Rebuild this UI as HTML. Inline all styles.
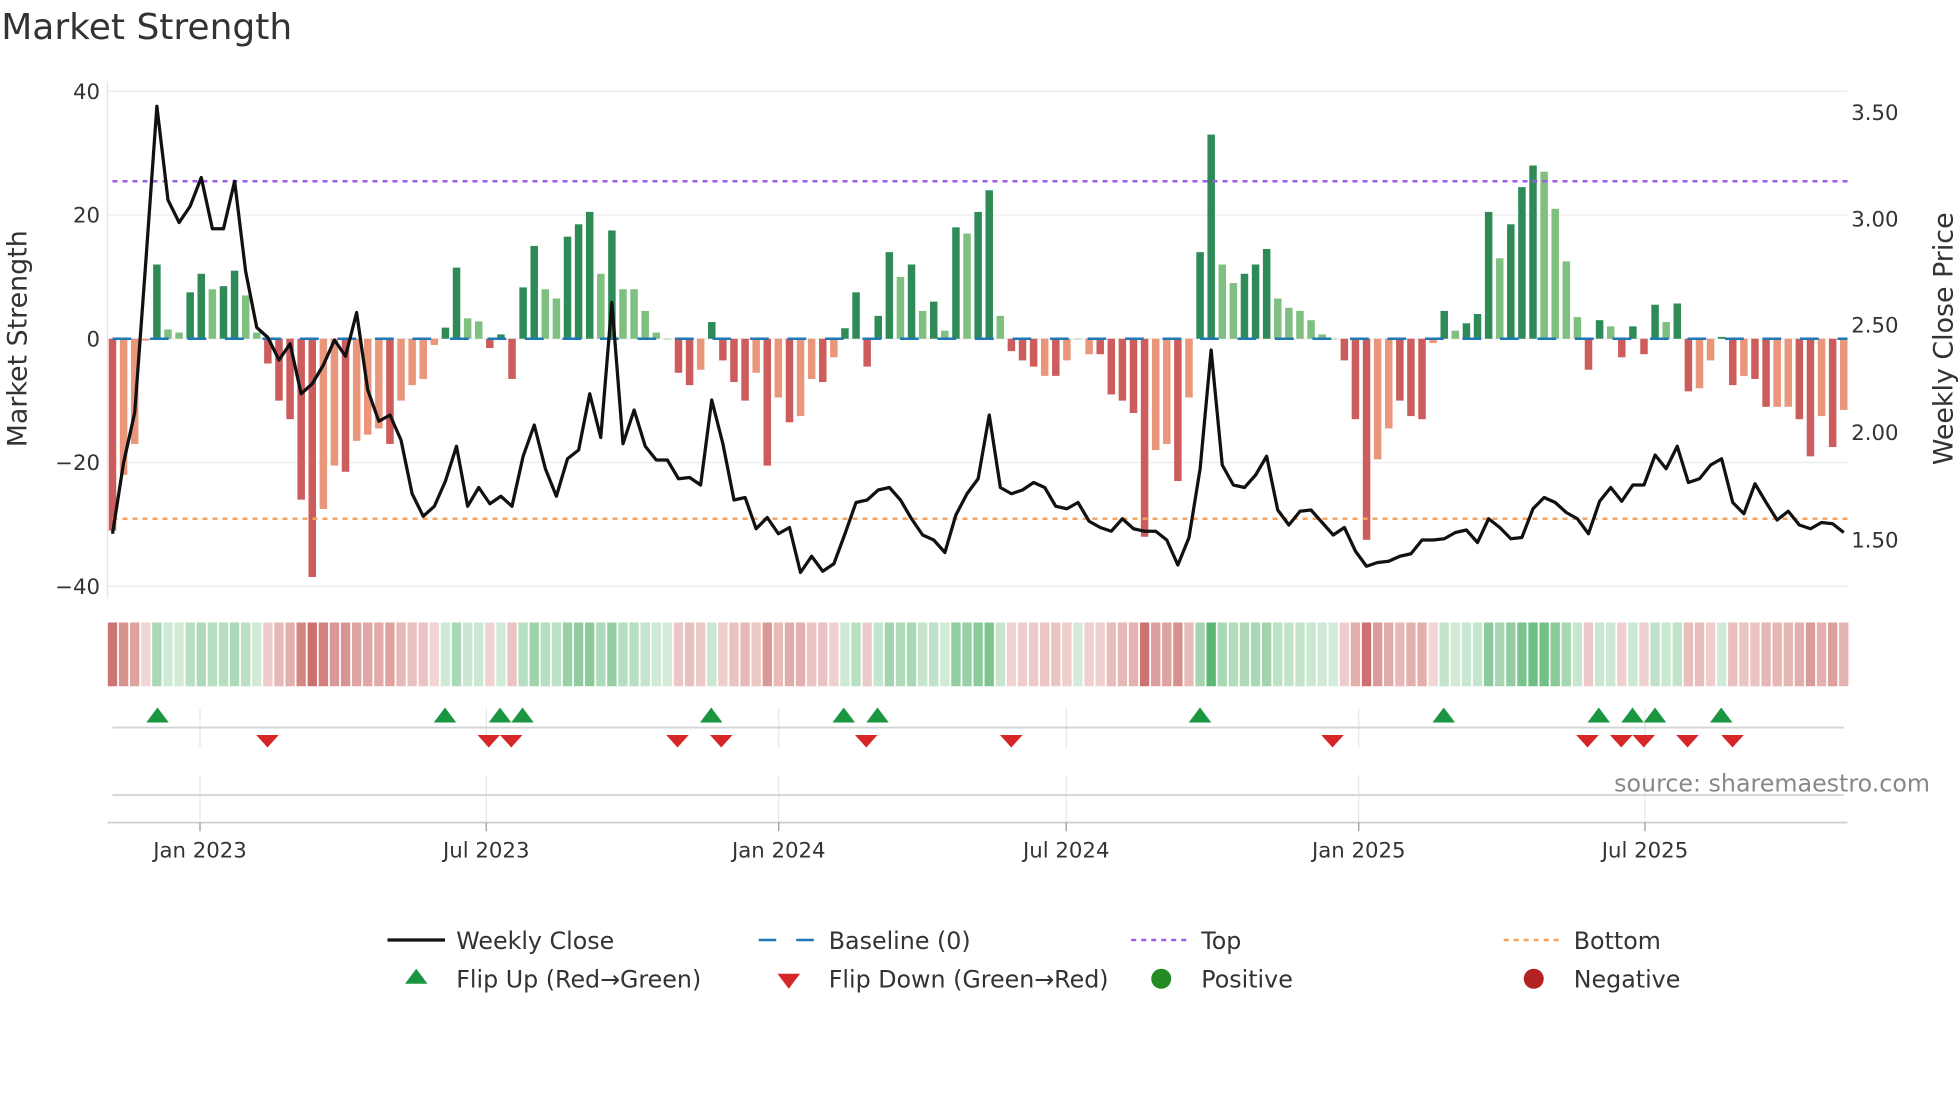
<!DOCTYPE html>
<html><head><meta charset="utf-8"><style>
html,body{margin:0;padding:0;background:#fff;}
svg{display:block;font-family:"DejaVu Sans","Liberation Sans",sans-serif;}
</style></head><body>
<svg id="s" width="1960" height="1102" viewBox="0 0 1568 881.6" xmlns="http://www.w3.org/2000/svg">
<rect width="1568" height="881.6" fill="#fff"/>
<text x="1" y="31" font-size="28.8" fill="#333">Market Strength</text>
<g stroke="#ececec" stroke-width="1">
<line x1="86" y1="73" x2="1478" y2="73"/><line x1="86" y1="172" x2="1478" y2="172"/>
<line x1="86" y1="271" x2="1478" y2="271"/><line x1="86" y1="370" x2="1478" y2="370"/>
<line x1="86" y1="469" x2="1478" y2="469"/>
</g>
<line x1="86" y1="65" x2="86" y2="478" stroke="#e4e4e4"/>
<g font-size="17" fill="#333" text-anchor="end">
<text x="80" y="79">40</text><text x="80" y="178">20</text><text x="80" y="277">0</text>
<text x="80" y="376">−20</text><text x="80" y="475">−40</text>
</g>
<g font-size="17" fill="#333">
<text x="1481" y="96">3.50</text><text x="1481" y="181">3.00</text><text x="1481" y="266">2.50</text>
<text x="1481" y="352">2.00</text><text x="1481" y="438">1.50</text>
</g>
<text transform="translate(21,271) rotate(-90)" font-size="21.5" fill="#333" text-anchor="middle">Market Strength</text>
<text transform="translate(1562,271) rotate(-90)" font-size="21.5" fill="#333" text-anchor="middle">Weekly Close Price</text>
<g id="bars"></g>
<line x1="90" y1="271" x2="1478" y2="271" stroke="#1f77b4" stroke-width="2" stroke-dasharray="15,15"/>
<line x1="90" y1="145" x2="1478" y2="145" stroke="#9b5de5" stroke-width="2" stroke-dasharray="4,4"/>
<line x1="90" y1="415" x2="1478" y2="415" stroke="#f4a460" stroke-width="2" stroke-dasharray="4,4"/>
<polyline id="pl" fill="none" stroke="#111" stroke-width="2.6" stroke-linejoin="round"/>
<g id="heat"></g>
<g stroke="#e6e6e6" stroke-width="1">
<line x1="160" y1="567" x2="160" y2="598"/><line x1="389" y1="567" x2="389" y2="598"/><line x1="623" y1="567" x2="623" y2="598"/><line x1="853" y1="567" x2="853" y2="598"/><line x1="1087" y1="567" x2="1087" y2="598"/><line x1="1316" y1="567" x2="1316" y2="598"/>
<line x1="160" y1="620" x2="160" y2="657"/><line x1="389" y1="620" x2="389" y2="657"/><line x1="623" y1="620" x2="623" y2="657"/><line x1="853" y1="620" x2="853" y2="657"/><line x1="1087" y1="620" x2="1087" y2="657"/><line x1="1316" y1="620" x2="1316" y2="657"/>
</g>
<line x1="90" y1="582" x2="1475" y2="582" stroke="#d4d4d4" stroke-width="1.5"/>
<line x1="90" y1="636" x2="1475" y2="636" stroke="#d4d4d4" stroke-width="1.5"/>
<line x1="86" y1="658" x2="1478" y2="658" stroke="#d0d0d0" stroke-width="1.5"/>
<g stroke="#999" stroke-width="1"><line x1="160" y1="658" x2="160" y2="665"/><line x1="389" y1="658" x2="389" y2="665"/><line x1="623" y1="658" x2="623" y2="665"/><line x1="853" y1="658" x2="853" y2="665"/><line x1="1087" y1="658" x2="1087" y2="665"/><line x1="1316" y1="658" x2="1316" y2="665"/></g>
<g id="mk"></g>
<text x="1544" y="633" font-size="19" fill="#888" text-anchor="end">source: sharemaestro.com</text>
<g font-size="17" fill="#333" text-anchor="middle">
<text x="160" y="686">Jan 2023</text><text x="389" y="686">Jul 2023</text><text x="623" y="686">Jan 2024</text>
<text x="853" y="686">Jul 2024</text><text x="1087" y="686">Jan 2025</text><text x="1316" y="686">Jul 2025</text>
</g>
<g font-size="19" fill="#333">
<line x1="310" y1="752" x2="356" y2="752" stroke="#111" stroke-width="2.6"/><text x="365" y="759">Weekly Close</text>
<line x1="607" y1="752" x2="651" y2="752" stroke="#1f77b4" stroke-width="2" stroke-dasharray="14,16"/><text x="663" y="759">Baseline (0)</text>
<line x1="905" y1="752" x2="949" y2="752" stroke="#9b5de5" stroke-width="2" stroke-dasharray="4,4"/><text x="961" y="759">Top</text>
<line x1="1203" y1="752" x2="1247" y2="752" stroke="#f4a460" stroke-width="2" stroke-dasharray="4,4"/><text x="1259" y="759">Bottom</text>
<polygon points="324,787 342,787 333,775" fill="#1a9641"/><text x="365" y="790">Flip Up (Red→Green)</text>
<polygon points="622,779 640,779 631,791" fill="#d62728"/><text x="663" y="790">Flip Down (Green→Red)</text>
<circle cx="929" cy="783" r="8" fill="#228b22"/><text x="961" y="790">Positive</text>
<circle cx="1227" cy="783" r="8" fill="#b22222"/><text x="1259" y="790">Negative</text>
</g>
</svg>
<script>
var V=[[-31,1],[-22,0],[-17,0],[-0.3,0],[12,1],[1.5,0],[1,0],[7.5,1],[10.5,1],[8,0],[8.5,1],[11,1],[7,0],[1,0],[-4,1],[-10,1],[-13,1],[-26,1],[-38.5,1],[-27.5,0],[-20.5,0],[-21.5,1],[-16.5,0],[-15.5,0],[-14.5,0],[-17,1],[-10,0],[-7.5,0],[-6.5,0],[-1,0],[1.8,1],[11.5,1],[3.3,0],[2.8,0],[-1.5,1],[0.7,1],[-6.5,1],[8.3,1],[15,1],[8,0],[6.5,0],[16.5,1],[18.5,1],[20.5,1],[10.5,0],[17.5,1],[8,0],[8,0],[4.5,0],[1,0],[0,0],[-5.5,1],[-7.5,1],[-5,0],[2.7,1],[-3.5,1],[-7,1],[-10,1],[-5.5,0],[-20.5,1],[-9.5,0],[-13.5,1],[-12.5,0],[-6.5,0],[-7,1],[-3,0],[1.7,1],[7.5,1],[-4.5,1],[3.7,1],[14,1],[10,0],[12,1],[4.5,0],[6,1],[1.3,0],[18,1],[17,0],[20.5,1],[24,1],[3.7,0],[-2,1],[-3.5,1],[-4.5,1],[-6,0],[-6,1],[-3.5,0],[0,0],[-2.5,0],[-2.5,1],[-9,1],[-10,1],[-12,1],[-32,1],[-18,0],[-17,0],[-23,1],[-9.5,0],[14,1],[33,1],[12,0],[9,0],[10.5,1],[12,1],[14.5,1],[6.5,0],[5,0],[4.5,0],[3,0],[0.7,0],[0,0],[-3.5,1],[-13,1],[-32.5,1],[-19.5,0],[-14.5,0],[-10,1],[-12.5,1],[-13,1],[-0.7,0],[4.5,1],[1.3,0],[2.5,1],[4,1],[20.5,1],[13,0],[18.5,1],[24.5,1],[28,1],[27,0],[21,0],[12.5,0],[3.5,0],[-5,1],[3,1],[2,0],[-3,1],[2,1],[-2.5,1],[5.5,1],[2.7,0],[5.7,1],[-8.5,1],[-8,0],[-3.5,0],[0.3,1],[-7.5,1],[-6,0],[-6.5,1],[-11,1],[-11,0],[-11,0],[-13,1],[-19,1],[-12.5,0],[-17.5,1],[-11.5,0]];
var P=[427,370,330,210,85,160,178,165,142,183,183,145,217,262,270,288,275,315,307,292,272,285,250,312,337,332,352,395,413,405,385,357,405,390,403,397,405,365,340,375,397,367,360,315,350,242,355,328,357,368,368,383,382,388,320,355,400,398,423,414,427,422,458,445,457,451,427,402,400,392,390,400,415,428,432,442,412,395,383,332,390,395,392,386,390,405,407,402,417,422,425,415,423,425,425,432,452,430,375,280,372,388,390,380,365,408,420,409,408,418,428,422,441,453,450,449,445,443,432,432,431,426,424,434,415,422,431,430,407,398,402,410,415,427,401,390,401,388,388,364,375,357,386,383,372,367,402,411,387,402,416,409,420,423,418,419,426];
var ns="http://www.w3.org/2000/svg",dx=(1475-90)/156;
function el(t,a,p){var e=document.createElementNS(ns,t);for(var k in a)e.setAttribute(k,a[k]);document.getElementById(p).appendChild(e);return e;}
var pts=[];
for(var i=0;i<V.length;i++){var v=V[i][0],d=V[i][1],x=90+i*dx;
var c=v>=0?(d?"#2e8b57":"#7fbf7f"):(d?"#cd5c5c":"#e9967a");
var y0=271,y1=271-v*4.95;
el("rect",{x:x-3,y:Math.min(y0,y1),width:6,height:Math.max(0.5,Math.abs(y1-y0)),fill:c},"bars");
var a=0.22+0.6*Math.min(1,Math.abs(v)/33);
el("rect",{x:x-dx/2+0.7,y:498,width:dx-1.4,height:51,fill:v>=0?"#3aa655":"#c0504d","fill-opacity":a.toFixed(2)},"heat");
pts.push(x.toFixed(1)+","+P[i]);}
document.getElementById("pl").setAttribute("points",pts.join(" "));
[126,356,400,418,569,675,702,960,1155,1279,1306,1324,1377].forEach(function(x){el("polygon",{points:(x-9)+",578 "+(x+9)+",578 "+x+",566",fill:"#1a9641"},"mk");});
[214,391,409,542,577,693,809,1066,1270,1297,1315,1350,1386].forEach(function(x){el("polygon",{points:(x-9)+",588 "+(x+9)+",588 "+x+",598",fill:"#d62728"},"mk");});
</script>
</body></html>
